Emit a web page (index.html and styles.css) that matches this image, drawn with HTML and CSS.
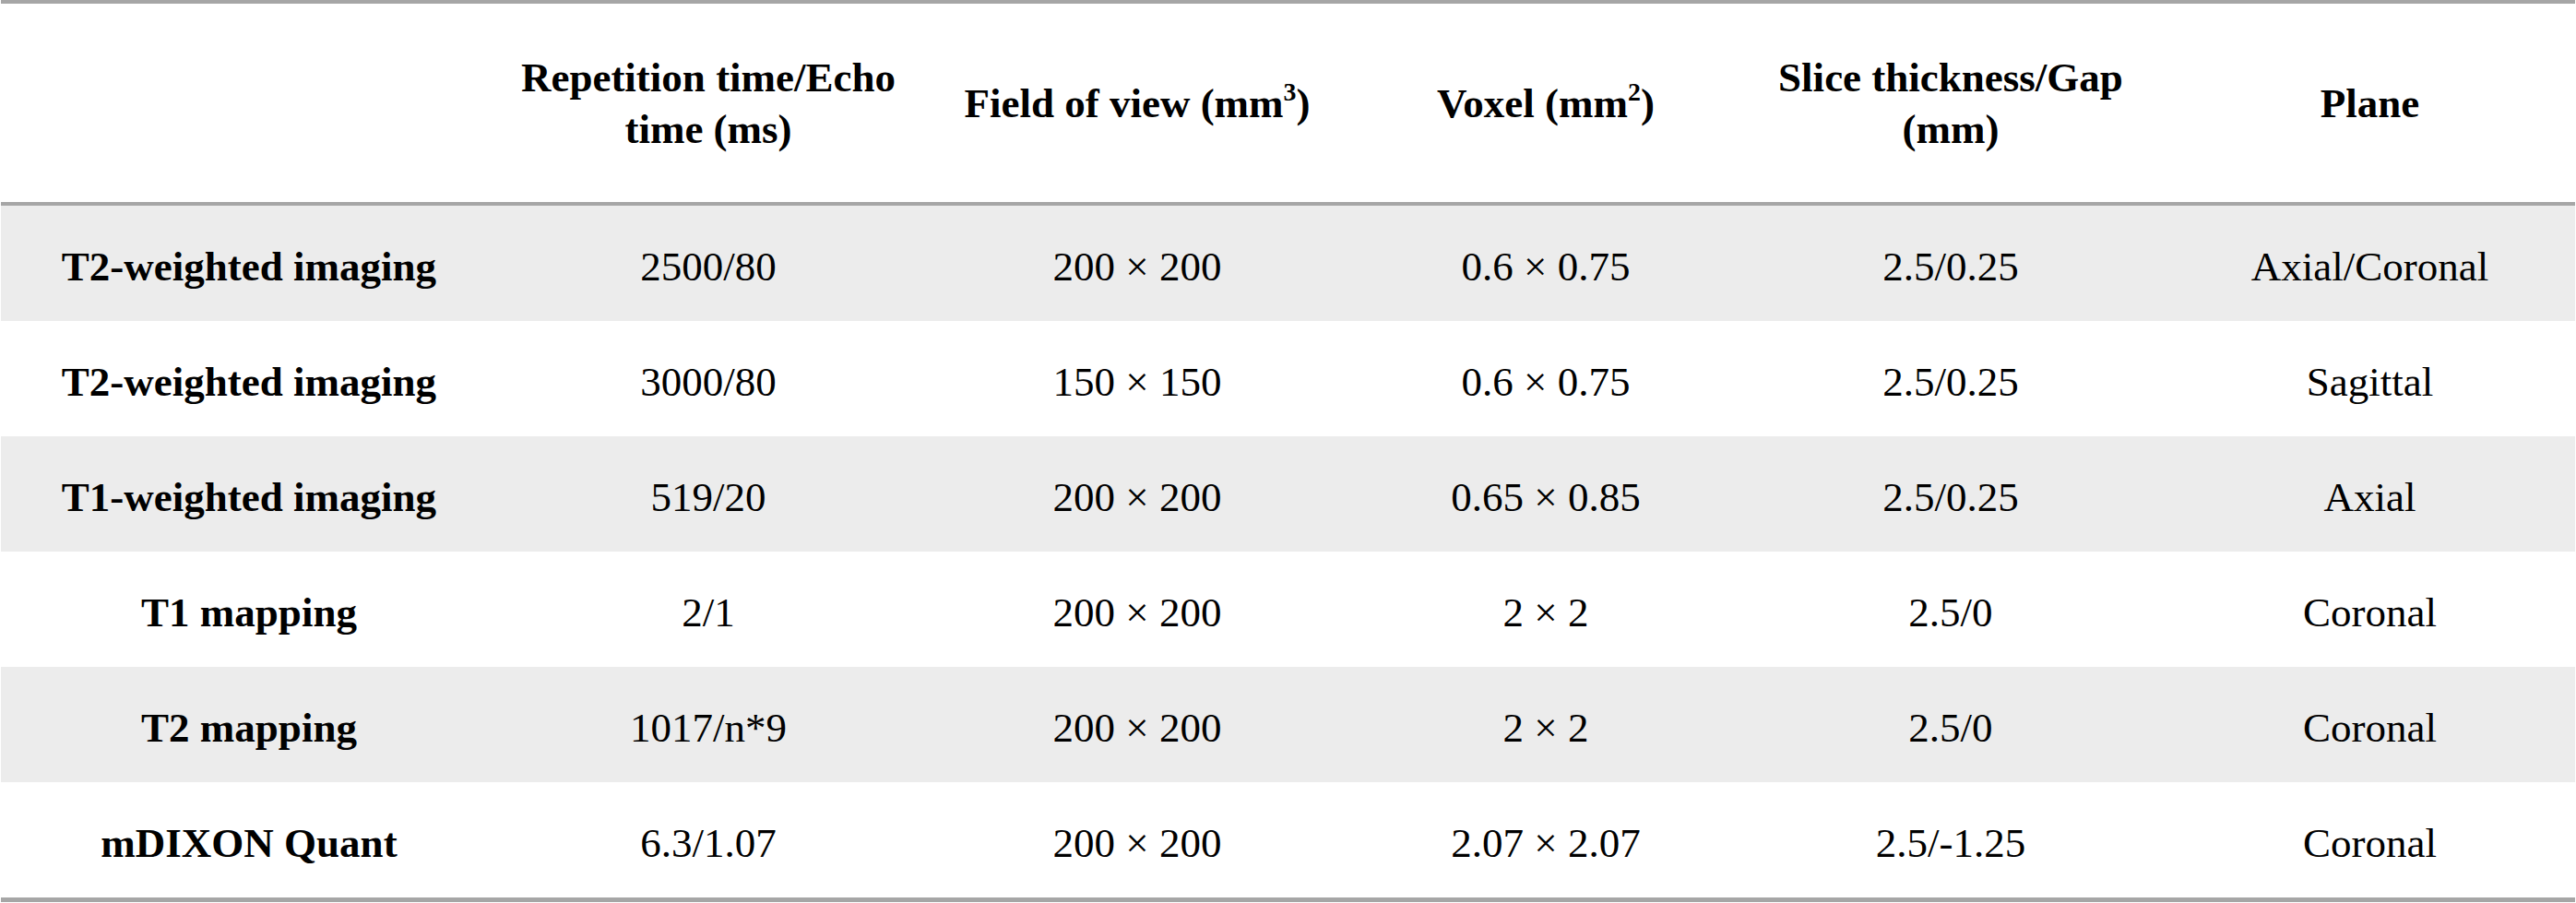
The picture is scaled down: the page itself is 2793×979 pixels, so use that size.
FILE: index.html
```html
<!DOCTYPE html>
<html lang="en">
<head>
<meta charset="utf-8">
<title>MRI sequence parameters</title>
<link rel="stylesheet" href="styles.css">
</head>
<body>
<div class="table">
  <div class="row head">
    <div class="cell"></div>
    <div class="cell">Repetition time/Echo<br>time (ms)</div>
    <div class="cell">Field of view (mm<sup>3</sup>)</div>
    <div class="cell">Voxel (mm<sup>2</sup>)</div>
    <div class="cell">Slice thickness/Gap<br>(mm)</div>
    <div class="cell">Plane</div>
  </div>
  <div class="row shade">
    <div class="cell label">T2-weighted imaging</div>
    <div class="cell">2500/80</div>
    <div class="cell">200 × 200</div>
    <div class="cell">0.6 × 0.75</div>
    <div class="cell">2.5/0.25</div>
    <div class="cell">Axial/Coronal</div>
  </div>
  <div class="row">
    <div class="cell label">T2-weighted imaging</div>
    <div class="cell">3000/80</div>
    <div class="cell">150 × 150</div>
    <div class="cell">0.6 × 0.75</div>
    <div class="cell">2.5/0.25</div>
    <div class="cell">Sagittal</div>
  </div>
  <div class="row shade">
    <div class="cell label">T1-weighted imaging</div>
    <div class="cell">519/20</div>
    <div class="cell">200 × 200</div>
    <div class="cell">0.65 × 0.85</div>
    <div class="cell">2.5/0.25</div>
    <div class="cell">Axial</div>
  </div>
  <div class="row">
    <div class="cell label">T1 mapping</div>
    <div class="cell">2/1</div>
    <div class="cell">200 × 200</div>
    <div class="cell">2 × 2</div>
    <div class="cell">2.5/0</div>
    <div class="cell">Coronal</div>
  </div>
  <div class="row shade">
    <div class="cell label">T2 mapping</div>
    <div class="cell">1017/n*9</div>
    <div class="cell">200 × 200</div>
    <div class="cell">2 × 2</div>
    <div class="cell">2.5/0</div>
    <div class="cell">Coronal</div>
  </div>
  <div class="row">
    <div class="cell label">mDIXON Quant</div>
    <div class="cell">6.3/1.07</div>
    <div class="cell">200 × 200</div>
    <div class="cell">2.07 × 2.07</div>
    <div class="cell">2.5/-1.25</div>
    <div class="cell">Coronal</div>
  </div>
</div>
</body>
</html>
```

FILE: styles.css
```css
html, body {
  margin: 0;
  padding: 0;
  background: #ffffff;
}

body {
  font-family: "Liberation Serif", "Times New Roman", serif;
  font-size: 45px;
  color: #000000;
  padding-left: 1px;
}

.table {
  width: 2791px;
  display: flex;
  flex-direction: column;
  border-top: 4px solid #a6a6a6;
  border-bottom: 5px solid #a6a6a6;
}

.row {
  display: grid;
  grid-template-columns: 538px 458px 472px 414px 464px 445px;
  height: 125px;
}

.row.head {
  height: 215px;
  border-bottom: 4px solid #a6a6a6;
  font-weight: bold;
  line-height: 56px;
}

.row.head .cell {
  padding-top: 0;
}

.row.shade {
  background: #ececec;
}

.cell {
  display: flex;
  align-items: center;
  justify-content: center;
  text-align: center;
  white-space: nowrap;
  padding-top: 6px;
}

.cell.label {
  font-weight: bold;
}

sup {
  font-size: 0.62em;
  line-height: 0;
  vertical-align: baseline;
  position: relative;
  top: -0.42em;
}
```
